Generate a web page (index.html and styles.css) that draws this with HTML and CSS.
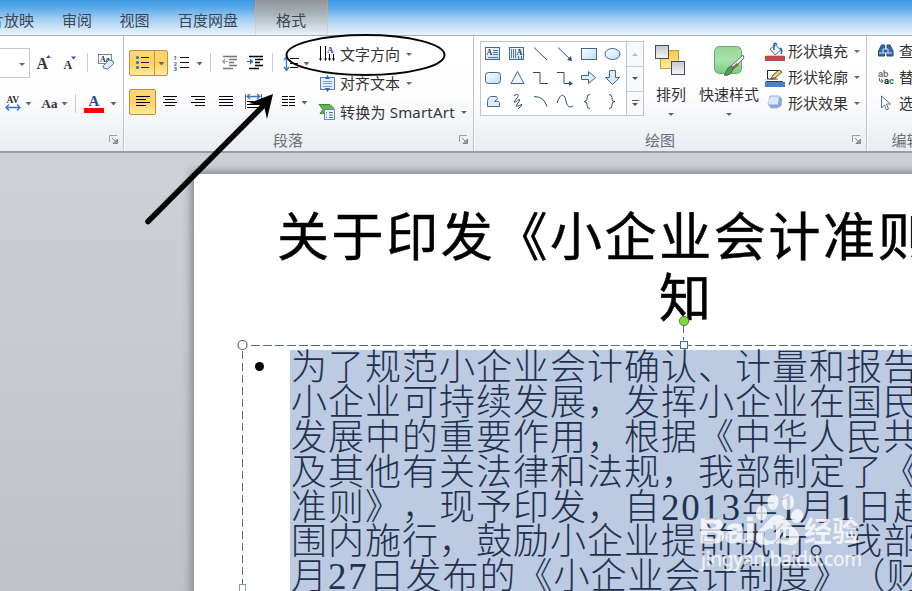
FILE: index.html
```html
<!DOCTYPE html>
<html lang="zh-CN">
<head>
<meta charset="utf-8">
<title>演示文稿</title>
<link rel="stylesheet" href="styles.css">
</head>
<body>
<div class="app">
  <svg class="defs" width="0" height="0">
    <defs>
      <linearGradient id="blue" x1="0" y1="0" x2="1" y2="1"><stop offset="0" stop-color="#fff"/><stop offset="1" stop-color="#bcdcf3"/></linearGradient>
      <linearGradient id="grey" x1="0" y1="0" x2="0" y2="1"><stop offset="0" stop-color="#c3c8cf"/><stop offset="1" stop-color="#f5f6f8"/></linearGradient>
      <linearGradient id="gold" x1="0" y1="0" x2="0" y2="1"><stop offset="0" stop-color="#f4c84c"/><stop offset="1" stop-color="#fff0a0"/></linearGradient>
      <linearGradient id="green" x1="0" y1="0" x2="0" y2="1"><stop offset="0" stop-color="#93d698"/><stop offset=".5" stop-color="#a9e2aa"/><stop offset="1" stop-color="#79ca83"/></linearGradient>
    </defs>
  </svg>
  <nav class="tabs">
    <span class="tab tab-show">片放映</span>
    <span class="tab">审阅</span>
    <span class="tab">视图</span>
    <span class="tab tab-wide">百度网盘</span>
    <span class="tab tab-active">格式</span>
  </nav>

  <section class="ribbon">
    <div class="group group-font">
      <div class="row row-font-top">
        <div class="combo"><i class="caret"></i></div>
        <svg width="54" height="30" viewBox="33 48 54 30"><text class="ic-serif" x="36.500" y="68.500" font-size="16">A</text><path d="M46 58l2.500-3 2.500 3z" fill="#2e5ca8"/><text class="ic-serif" x="63.500" y="68.500" font-size="12">A</text><path d="M71 56.500h5l-2.500 3z" fill="#2e5ca8"/></svg>
        <svg width="36" height="30" viewBox="87 48 36 30"><path d="M87.500 53v19" stroke="#c8cbd0"/><rect x="98.500" y="54.500" width="13" height="9" fill="#fff" stroke="#6989b4"/><text class="ic-serif" x="100" y="62" font-size="8">Aa</text><path d="M103 66l6-6 4 1 .5 3-6 5-4-1z" fill="#e3edf9" stroke="#5074ae"/></svg>
      </div>
      <div class="row row-font-bottom">
        <svg width="36" height="30" viewBox="0 88 36 30"><text class="ic-serif" x="6.500" y="103" font-size="9.500">AV</text><path d="M6 107.500h14M9 104.500l-3 3 3 3M17 104.500l3 3-3 3" stroke="#3b72c9" stroke-width="1.300" fill="none"/><path class="car" d="M25.500 102h6l-3 3.500z"/></svg>
        <svg width="39" height="30" viewBox="36 88 39 30"><text class="ic-serif" x="41.500" y="108" font-size="13">Aa</text><path class="car" d="M61.500 102h6l-3 3.500z"/></svg>
        <svg width="48" height="30" viewBox="75 88 48 30"><path d="M75.500 94v19" stroke="#c8cbd0"/><text class="ic-serif blue" x="88.500" y="106" font-size="15">A</text><path d="M84 108h20v5H84z" fill="#f00"/><path class="car" d="M110.500 102h6l-3 3.500z"/></svg>
      </div>
      <div class="label"><span></span><svg class="launch" width="11" height="11" viewBox="0 0 11 11"><path d="M1.500 8V1.500H9" stroke="#999da2" fill="none"/><path d="M4 4l3 3M9.500 5v4.500H5z" stroke="#85898e" fill="#999"/></svg></div>
    </div>

    <div class="group group-para">
      <div class="para-cols">
        <div class="para-icons">
          <div class="row row-para-top">
            <div class="hot split"><svg width="37" height="24" viewBox="130 51 37 24"><g fill="#3569c0"><circle cx="137.500" cy="57.500" r="1.600"/><circle cx="137.500" cy="62.500" r="1.600"/><circle cx="137.500" cy="67.500" r="1.600"/></g><path d="M141 57.500h8M141 62.500h8M141 67.500h8" stroke="#222"/><path d="M154.500 51v24" stroke="#c79537"/><path class="car" d="M158.500 62h6l-3 3.500z"/></svg></div>
            <svg width="42" height="26" viewBox="168 50 42 26"><path d="M180 57.500h9M180 62.500h9M180 67.500h9" stroke="#111"/><g class="num"><text x="173.500" y="60">1</text><text x="173.500" y="65.500">2</text><text x="173.500" y="71">3</text></g><path class="car" d="M196.500 62h6l-3 3.500z"/></svg>
            <svg width="62" height="26" viewBox="210 50 62 26"><path d="M210.500 53v19" stroke="#c8cbd0"/><path d="M223 56.500h14M229 59.500h8M229 62.500h5M229 65.500h8M223 68.500h10" stroke="#777" stroke-width="1.500"/><path d="M228 61.500h-5M225 59l-3 2.500 3 2.500" stroke="#a3a8b0" fill="#a3a8b0"/><path d="M249 56.500h14M255 59.500h8M255 62.500h5M255 65.500h8M249 68.500h10" stroke="#000" stroke-width="1.500"/><path d="M247 61.500h5M250 59l3 2.500-3 2.500" stroke="#2d62c2" fill="#2d62c2"/></svg>
            <svg width="40" height="26" viewBox="272 50 40 26"><path d="M272.500 53v19" stroke="#c8cbd0"/><path d="M286.500 57v12M284 60l2.500-3 2.500 3M284 67l2.500 3.500 2.500-3.500" stroke="#3b72c9" stroke-width="1.300" fill="none"/><path d="M290 58.500h9M290 63.500h8M290 67.500h8" stroke="#111"/><path class="car" d="M303.500 62h6l-3 3.500z"/></svg>
          </div>
          <div class="row row-para-bottom">
            <div class="hot"><svg width="25" height="24" viewBox="130 90 25 24"><path d="M136 96.500h14M136 99.500h10M136 102.500h14M136 105.500h10" stroke="#000" stroke-width="1.200"/></svg></div>
            <svg width="84" height="26" viewBox="156 89 84 26"><path d="M163 96.500h14M165 99.500h10M163 102.500h14M165 105.500h10M191 96.500h14M195 99.500h10M191 102.500h14M195 105.500h10M219 96.500h14M219 99.500h14M219 102.500h14M219 105.500h14" stroke="#000" stroke-width="1.200"/></svg>
            <svg width="72" height="26" viewBox="240 89 72 26"><path d="M245.500 94v15M261.500 94v15" stroke="#666"/><path d="M247 96.500h13M250 94l-3 2.500 3 2.500M257 94l3 2.500-3 2.500" stroke="#3b72c9" stroke-width="1.300" fill="none"/><path d="M247 101.500h13M247 104.500h13M247 107.500h13M282 96.500h6M289 96.500h6M282 99.500h6M289 99.500h6M282 102.500h6M289 102.500h6M282 105.500h6M289 105.500h6" stroke="#000" stroke-width="1.200"/><path class="car" d="M301.500 101h6l-3 3.500z"/></svg>
          </div>
        </div>
        <div class="cmds cmds-para">
          <div class="cmd"><svg width="24" height="24" viewBox="316 43 24 24"><path d="M320.500 46v14M325.500 46v14M329.500 54v6M333.500 54v6" stroke="#000"/><path d="M319 58.500l1.500 2.500 1.500-2.500M324 58.500l1.500 2.500 1.500-2.500M328 58.500l1.500 2.500 1.500-2.500M332 58.500l1.500 2.500 1.500-2.500" fill="#000"/><text class="ic-serif blue" x="327" y="53" font-size="9">A</text></svg><span>文字方向</span><i class="caret"></i></div>
          <div class="cmd"><svg width="24" height="24" viewBox="316 72 24 24"><rect x="320.500" y="77.500" width="14" height="12" fill="#e4eefb" stroke="#5a7fb8"/><path d="M323 81.500h9M323 83.500h9M323 86.500h9" stroke="#7f9bc8"/><path d="M325 79l2.500-4 2.500 4zM325 88l2.500 4 2.500-4z" fill="#2e65c5"/></svg><span>对齐文本</span><i class="caret"></i></div>
          <div class="cmd"><svg width="24" height="24" viewBox="316 101 24 24"><path d="M319 104.500h11l4 4-4 5h-10l3-4z" fill="#63b54f" stroke="#3c8c37"/><rect x="324.500" y="109.500" width="10" height="10" fill="#f4f8fe" stroke="#678bb8"/><path d="M326 112.500h1M329 112.500h4M326 115h1M329 115h4M326 117.500h1M329 117.500h4" stroke="#5279aa"/></svg><span class="smart">转换为 SmartArt</span><i class="caret"></i></div>
        </div>
      </div>
      <div class="label"><span>段落</span><svg class="launch" width="11" height="11" viewBox="0 0 11 11"><path d="M1.500 8V1.500H9" stroke="#999da2" fill="none"/><path d="M4 4l3 3M9.500 5v4.500H5z" stroke="#85898e" fill="#999"/></svg></div>
    </div>

    <div class="group group-draw">
      <div class="draw-cols">
        <div class="gallery">
          <svg width="145" height="73" viewBox="481 42 145 73"><g fill="url(#blue)" stroke="#41688f"><rect x="485.500" y="47.500" width="14" height="12"/><rect x="509.500" y="47.500" width="14" height="12"/><rect x="581.500" y="48.500" width="15" height="11"/><ellipse cx="612.500" cy="54" rx="7.500" ry="5.500"/><rect x="485.500" y="72.500" width="15" height="11" rx="3"/><path d="M517.500 71.500l6.500 12h-13zM581.500 75.500h7v-4l7 6-7 6v-4h-7zM609.500 70.500h6v7h4l-7 7-7-7h4zM490.500 96.500h6l1 2-3 3q5-1 5 2v3h-12v-5q0-4 3-5z"/></g><text class="ic-serif" x="486.500" y="55" font-size="8">A</text><text class="ic-serif" x="516.500" y="55" font-size="8">A</text><path d="M493 50.500h5M493 52.500h5M493 54.500h5M488 57.500h10M511.500 49v9M513.500 49v9M515.500 49v9M518.500 56v3M521.500 56v3" stroke="#577a9f"/><g fill="none" stroke="#2c4a77"><path d="M534 47.500l13 12.500M558 47.500l13 12.500M533 72.500h7v11h8M557 72.500h7v11h6M514 96c4-4 6 0 2 3l-2 3c2 1 5-4 6-2l-4 6c3 1 6-3 6-1l-4 4M534 96.500q10 0 13 10M557 103c4-12 8-8 9-2s4 7 7 5M590 94.500q-3 0-3 3v2q0 2-3 2 3 0 3 3v1q0 3 3 3M609 94.500q3 0 3 3v2q0 2 3 2-3 0-3 3v1q0 3-3 3"/></g><path d="M572 61l-1-5-4 4zM569 81v5l4-2.500z" fill="#2c4a77"/></svg>
          <div class="scroll"><i class="up"></i><i class="down"></i><i class="more"></i></div>
        </div>
        <div class="big"><svg width="34" height="36" viewBox="655 42 34 36"><rect x="661.500" y="50.500" width="18" height="18" fill="url(#gold)" stroke="#c59b39"/><rect x="656.500" y="45.500" width="13" height="13" fill="url(#grey)" stroke="#454c57"/><rect x="672.500" y="61.500" width="13" height="13" fill="url(#grey)" stroke="#454c57"/></svg><span>排列</span><i class="caret"></i></div>
        <div class="big big-wide"><svg width="36" height="36" viewBox="711 42 36 36"><rect x="714.500" y="46.500" width="27" height="27" rx="5" fill="url(#green)" stroke="#5bae70"/><path d="M744 58l-10 10-3-2 12-11z" fill="#eceef0" stroke="#6d737a"/><path d="M734 68l-4 6q-3 2-6 1c3-2 2-7 7-9z" fill="#5a9d5a" stroke="#34703f"/><path d="M737 63l-6 5 2 2 6-5z" fill="#866b45"/></svg><span>快速样式</span><i class="caret"></i></div>
        <div class="cmds cmds-draw">
          <div class="cmd"><svg width="24" height="24" viewBox="764 39 24 24"><path d="M765 56h20v5h-20z" fill="#bd4a48"/><path d="M766 55.500h18" stroke="#eedb4d"/><path d="M770 49l5-4 6 5-6 5z" fill="#f0f4fa" stroke="#5c6f8c"/><path d="M774 50v-6q1-2 3 1M780 48q3 2 1 6" fill="none" stroke="#2c68bd" stroke-width="1.600"/></svg><span>形状填充</span><i class="caret"></i></div>
          <div class="cmd"><svg width="24" height="24" viewBox="764 65 24 24"><path d="M765 82h20v5h-20z" fill="#4b81bf"/><path d="M767 70.500h12M767.500 71v8h10" stroke="#222" fill="none"/><path d="M766 81.500h17" stroke="#2336a6"/><path d="M771 79l2-4 6-5 3 2-7 6z" fill="#f6d26e" stroke="#57462f"/></svg><span>形状轮廓</span><i class="caret"></i></div>
          <div class="cmd"><svg width="24" height="24" viewBox="764 91 24 24"><path d="M770 96h9l3 3-1 7-4 2h-6l-3-4z" fill="#87a5d7" stroke="#a3b8dc"/><path d="M771 96.500h8l-1 8-9 0q-2-4 2-8z" fill="#dce8fa"/></svg><span>形状效果</span><i class="caret"></i></div>
        </div>
      </div>
      <div class="label"><span>绘图</span><svg class="launch" width="11" height="11" viewBox="0 0 11 11"><path d="M1.500 8V1.500H9" stroke="#999da2" fill="none"/><path d="M4 4l3 3M9.500 5v4.500H5z" stroke="#85898e" fill="#999"/></svg></div>
    </div>

    <div class="group group-edit">
      <div class="cmds cmds-edit">
        <div class="cmd"><svg width="26" height="24" viewBox="873 39 26 24"><path d="M878.500 56v-5l3-6h3v11zM887 56V45h3l3 6v5z" fill="#3767aa" stroke="#234776"/><path d="M883 49h5v4h-5zM879 53h4M888 53h4" stroke="#d4e3f8" fill="#3767aa"/></svg><span>查找</span></div>
        <div class="cmd"><svg width="26" height="24" viewBox="873 65 26 24"><g font-family="Roboto" font-weight="700" font-size="9.500"><text x="878" y="76.500" fill="#777">ab</text><text x="884" y="83.500" fill="#222">a<tspan fill="#249238">c</tspan></text></g><path d="M879.500 78v3h4M881 79l2 2-2 2" fill="none" stroke="#476eaa"/></svg><span>替换</span></div>
        <div class="cmd"><svg width="26" height="24" viewBox="873 91 26 24"><path d="M881.500 96v12l3-3 2 5 2-1-2-5h4z" fill="#fff" stroke="#5173a0"/></svg><span>选择</span></div>
      </div>
      <div class="label"><span>编辑</span></div>
    </div>
  </section>

  <main class="workspace">
    <article class="slide">
      <h1><span>关于印发《小企业会计准则》的通</span><span>知</span></h1>
      <div class="textbox">
        <i class="bullet"></i>
        <div class="body">
          <p>为了规范小企业会计确认、计量和报告</p>
          <p>小企业可持续发展，发挥小企业在国民</p>
          <p>发展中的重要作用，根据《中华人民共</p>
          <p>及其他有关法律和法规，我部制定了《</p>
          <p>准则》，现予印发，自<b>2013</b>年<b>1</b>月<b>1</b>日起</p>
          <p>围内施行，鼓励小企业提前执行。我部</p>
          <p>月<b>27</b>日发布的《小企业会计制度》（财</p>
        </div>
      </div>
    </article>
  </main>

  <svg class="overlay" width="912" height="591" viewBox="0 0 912 591">
    <path d="M251 345.500H912" stroke="#4c709a" stroke-dasharray="9 3"/>
    <path d="M242.500 351V585M683.500 325v15" stroke="#4c709a" stroke-dasharray="8 4"/>
    <circle cx="242.500" cy="345" r="4.500" fill="#fff" stroke="#5c6067" stroke-width="1.200"/>
    <circle cx="684" cy="321" r="4.700" fill="#7cdd2e" stroke="#66716a"/>
    <rect x="680.500" y="341.500" width="7" height="7" fill="#fff" stroke="#456f9b"/>
    <rect x="239.500" y="584.500" width="6" height="9" fill="#fff" stroke="#7f9fbe"/>
    <g class="mark" opacity=".76" fill="#fff">
      <text x="699" y="543" font-size="35" font-weight="700" textLength="56" lengthAdjust="spacingAndGlyphs" stroke="#fff">Bai</text>
      <ellipse cx="761.500" cy="513" rx="5.500" ry="7.500"/><ellipse cx="773" cy="502" rx="5.500" ry="8"/><ellipse cx="788" cy="502" rx="6" ry="8"/><ellipse cx="797" cy="516" rx="6" ry="7" transform="rotate(20 797 516)"/>
      <path fill-rule="evenodd" d="M778 515c7 0 10 8 17 14 8 7 4 17-6 16-8-2-14-2-22 0-11 1-14-9-7-16 7-5 10-14 18-14zm-5 10v4c-8-1-10 4-8 9 2 4 9 3 11 1v-14zm7 4v8c0 4 5 4 9 3v-11h-3v8c-3 1-3 0-3-2v-6z"/>
      <text class="mark-cn" x="804" y="542" font-size="28" font-weight="700">经验</text>
      <text class="mark-url" x="701" y="566" font-size="19" textLength="161" stroke="#fff" stroke-width=".4">jingyan.baidu.com</text>
    </g>
    <ellipse cx="365.500" cy="55" rx="79" ry="20" fill="none" stroke="#050505" stroke-width="2"/>
    <path d="M148 221.500L262 107" stroke="#000" stroke-width="5.500" stroke-linecap="round"/>
    <path d="M273 94l-6 25-3-13-15-3z" fill="#000"/>
  </svg>
</div>
</body>
</html>
```

FILE: styles.css
```css
* { box-sizing: border-box; }
body { margin: 0; overflow: hidden; font-family: "Noto Sans", "Noto Sans CJK SC", sans-serif; font-size: 15px; color: #333; }
svg { display: block; flex: none; }
.defs { position: absolute; }
.app { position: relative; width: 912px; height: 591px; overflow: hidden; display: flex; flex-direction: column; }

.tabs { display: flex; height: 36px; background: linear-gradient(#3a96e0 0, #5caaea 8px, #a9d0f2 20px, #e5f2fc 34px); border-bottom: 1px solid #a5b0bd; }
.tab { width: 57px; padding-top: 9px; line-height: 22px; text-align: center; white-space: nowrap; color: #3c4652; flex: none; }
.tab-show { width: 48px; direction: rtl; padding-right: 14px; }
.tab-wide { width: 90px; }
.tab-show + .tab { width: 58px; }
.tab-active { margin-left: 2px; width: 73px; padding-right: 1px; border: solid #c09470; border-width: 0 1px; border-image: linear-gradient(#d08d58, #d8dfe8) 1; background: linear-gradient(#8f9497, #a8b4bd 14px, #e8eff5 34px); }

.ribbon { display: flex; flex: none; height: 117px; background: linear-gradient(#fff 0, #fdfdfe 60px, #e9ecf0 115px); border-bottom: 2px solid #999da3; }
.group { display: flex; flex-direction: column; flex: none; border-right: 1px solid #bfc3c9; box-shadow: 1px 0 #fff; }
.group-font { width: 124px; padding-top: 12px; }
.group-para { width: 350px; }
.group-draw { width: 393px; }
.group-edit { width: 80px; }
.row { display: flex; flex: none; }
.row-font-top { margin-bottom: 10px; }
.combo { width: 30px; height: 30px; margin-right: 3px; padding: 14px 0 0 19px; border: 1px solid #c4c8cd; border-left: 0; background: #fff; }
.caret { display: block; flex: none; width: 0; height: 0; border: 3px solid transparent; border-top-color: #666; border-bottom: 0; }
.car { fill: #666; }
.ic-serif { font-family: "Liberation Serif", serif; font-weight: 700; fill: #333; }
.ic-serif.blue { fill: #264f93; }
.num { font: 700 6px Roboto, sans-serif; fill: #2e5eae; }
.label { display: flex; height: 22px; margin-top: auto; color: #68707b; justify-content: center; position: relative; line-height: 23px; }
.launch { position: absolute; right: 4px; top: 5px; }
.group-para .label { padding-right: 21px; }
.group-draw .label { padding-right: 20px; }
.para-cols, .draw-cols { display: flex; }
.para-icons { width: 192px; padding: 14px 0 0 5px; }
.row-para-top { margin-bottom: 13px; }
.hot { width: 27px; height: 26px; border: 1px solid #c0923a; border-radius: 2px; background: linear-gradient(#fcd779, #fed263 50%, #ffeaa0); }
.split { width: 39px; }
.cmds { display: flex; flex-direction: column; }
.cmd { display: flex; align-items: center; white-space: nowrap; }
.cmd span { padding-bottom: 2px; }
.cmd .caret { margin-left: 6px; }
.smart { letter-spacing: .2px; }
.cmds-para { padding-top: 4px; }
.cmds-para .cmd { height: 29px; }
.cmds-draw { padding-top: 2px; }
.cmds-draw .cmd, .cmds-edit .cmd { height: 26px; }
.cmds-edit { padding: 2px 0 0 6px; }

.gallery { display: flex; width: 164px; height: 75px; margin: 5px 0 0 6px; border: 1px solid #c1c5ca; background: #fff; }
.scroll { display: grid; grid-template-rows: repeat(3, 1fr); width: 17px; border-left: 1px solid #c1c5ca; background: #f8f9fa; }
.scroll i { display: grid; place-items: center; }
.scroll i + i { border-top: 1px solid #c9cdd2; }
.scroll i::after { content: ""; border: 3px solid transparent; border-top-color: #555; border-bottom: 0; }
.scroll .up::after { border: 3px solid transparent; border-bottom-color: #bbb; border-top: 0; }
.scroll .more { align-content: center; gap: 2px; }
.scroll .more::before { content: ""; width: 7px; height: 1px; background: #555; }
.big { display: flex; flex-direction: column; align-items: center; width: 54px; padding-top: 6px; }
.big span { line-height: 22px; margin-top: 5px; white-space: nowrap; }
.big .caret { margin-top: 8px; }
.big-wide { width: 66px; padding-right: 4px; }

.workspace { flex: 1; padding: 21px 0 0 194px; background: linear-gradient(#cdd1d6, #bfc3c9); overflow: hidden; }
.slide { width: 960px; height: 500px; background: #fff; box-shadow: 0 0 8px 3px #858990; }
h1 { margin: 0; padding: 29px 0 0 83px; height: 176px; font: 400 52px/61px "Noto Sans CJK SC", sans-serif; letter-spacing: 2.600px; color: #000; -webkit-text-stroke: .5px #000; white-space: nowrap; text-spacing-trim: space-all; }
h1 span { display: block; }
h1 span + span { padding-left: 382px; }
.textbox { display: flex; padding-left: 61px; }
.bullet { width: 9px; height: 9px; margin: 12px 26px 0 0; border-radius: 50%; background: #000; }
.body { display: flow-root; width: 860px; height: 300px; background: #bccae2; }
.body p:first-child { margin-top: -3px; }
p { margin: 0; padding-left: 1px; height: 34.900px; line-height: 34.900px; font-family: "Noto Sans CJK SC", sans-serif; font-weight: 300; font-size: 36px; letter-spacing: 1px; color: #22324e; white-space: nowrap; text-spacing-trim: space-all; }
p b { font-family: "Liberation Serif", serif; font-weight: 400; font-size: 37px; letter-spacing: 1.700px; }
.overlay { position: absolute; left: 0; top: 0; pointer-events: none; }
.mark { font-family: "Liberation Sans", sans-serif; }
.mark-cn { font-family: "Noto Sans CJK SC", sans-serif; }
.mark-url { font-family: "Noto Sans", sans-serif; }
```
